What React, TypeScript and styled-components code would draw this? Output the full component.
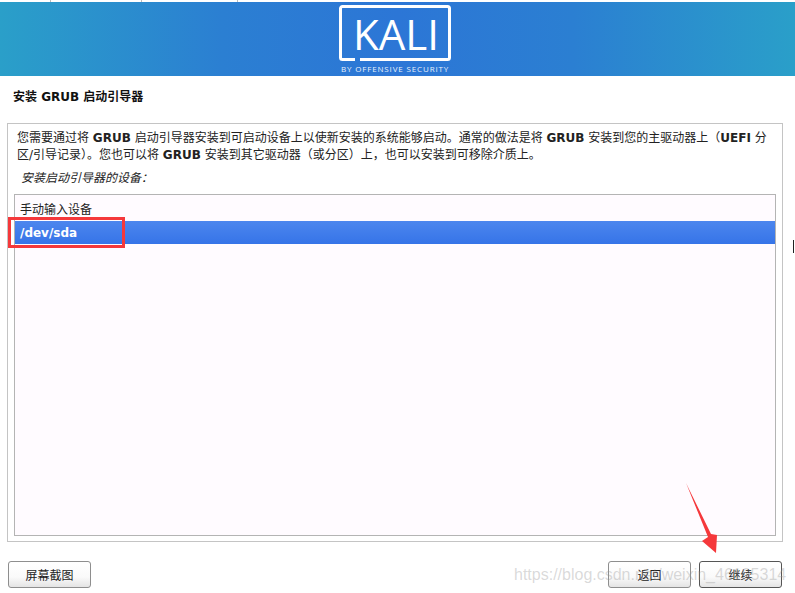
import React from 'react';
import styled, { createGlobalStyle } from 'styled-components';

const FONT = '"DejaVu Sans", "Noto Sans CJK SC", sans-serif';

const GlobalStyle = createGlobalStyle`
  html, body {
    margin: 0;
    padding: 0;
    background: #fff;
  }
  body {
    font-family: ${FONT};
    color: #222;
  }
`;

const Page = styled.div`
  position: relative;
  width: 795px;
  height: 593px;
  overflow: hidden;
  display: flex;
  flex-direction: column;
  background: #fff;
`;

const Banner = styled.header`
  height: 74px;
  margin-top: 2px;
  display: flex;
  justify-content: center;
  background: linear-gradient(90deg, #2a9fc9 0%, #2b7fd2 28%, #2c76d6 50%, #2b7fd2 72%, #2a9fc9 100%);
`;

const Heading = styled.h1`
  margin: 0;
  height: 47px;
  padding: 14px 0 0 13px;
  box-sizing: border-box;
  font-size: 12px;
  line-height: 14px;
  font-weight: 700;
  color: #111;
`;

const Panel = styled.section`
  width: 776px;
  height: 419px;
  margin-left: 7px;
  box-sizing: border-box;
  border: 1px solid #c4c4c4;
  padding: 6px 6px 5px;
  display: flex;
  flex-direction: column;
`;

const Intro = styled.p`
  margin: 0 0 0 3px;
  font-size: 12px;
  line-height: 17px;
  white-space: nowrap;
  color: #222;
`;

const Label = styled.p`
  margin: 6px 0 7px 7px;
  font-size: 12px;
  line-height: 17px;
  font-style: italic;
  color: #222;
`;

const DeviceList = styled.ul`
  flex: 1;
  list-style: none;
  margin: 0;
  padding: 5px 0 0;
  border: 1px solid #b4b4b4;
  background: #fffbff;
`;

const DeviceRow = styled.li<{ $selected?: boolean }>`
  height: ${p => (p.$selected ? 23 : 21)}px;
  padding-left: 5px;
  font-size: 12px;
  line-height: ${p => (p.$selected ? 24 : 21)}px;
  font-weight: ${p => (p.$selected ? 700 : 400)};
  color: ${p => (p.$selected ? '#fff' : '#222')};
  background: ${p => (p.$selected ? 'linear-gradient(180deg, #4c86ee 0%, #3674e8 100%)' : 'transparent')};
`;

const Footer = styled.footer`
  display: flex;
  justify-content: space-between;
  padding: 19px 13px 0 8px;
`;

const ButtonGroup = styled.div`
  display: flex;
  gap: 8px;
`;

const Button = styled.button<{ $focused?: boolean }>`
  width: 83px;
  height: 27px;
  padding: 0;
  border: 1px solid ${p => (p.$focused ? '#555' : '#8e8e8e')};
  border-radius: 3px;
  background: linear-gradient(180deg, #ffffff 0%, #fafafa 60%, #e4e4e4 100%);
  font-family: ${FONT};
  font-size: 12px;
  color: #222;
`;

const RedBox = styled.div`
  position: absolute;
  left: 8px;
  top: 217px;
  width: 111px;
  height: 25px;
  border: 3px solid #f5383b;
`;

const Overlay = styled.svg`
  position: absolute;
  left: 0;
  top: 0;
  pointer-events: none;
`;

const Watermark = styled.span`
  position: absolute;
  left: 514px;
  top: 566px;
  font-family: "Liberation Sans", sans-serif;
  font-size: 16px;
  line-height: 18px;
  white-space: nowrap;
  color: rgba(150, 150, 150, 0.36);
`;

function KaliLogo() {
  return (
    <svg width="119" height="74" viewBox="0 0 119 74">
      <path
        d="M17 57.5 H4.5 a2 2 0 0 1 -2 -2 V6.5 a2 2 0 0 1 2 -2 H109.5 a2 2 0 0 1 2 2 V55.5 a2 2 0 0 1 -2 2 H22"
        fill="none"
        stroke="#fff"
        strokeWidth="3"
      />
      <text x="15" y="48" textLength="86" lengthAdjust="spacingAndGlyphs" fontFamily='"Open Sans", sans-serif' fontWeight="500" fontSize="42" fill="#fff">
        KALI
      </text>
      <text x="57" y="69.5" textAnchor="middle" fontFamily='"Open Sans", sans-serif' fontSize="8" letterSpacing="0.85" fill="#e8f0fb">
        BY OFFENSIVE SECURITY
      </text>
    </svg>
  );
}

function Annotations() {
  return (
    <Overlay width="795" height="593" viewBox="0 0 795 593">
      <path d="M686 483 L711 534 L717 535 L716 553 L702 541 L708 537 Z" fill="#f5383b" />
      <rect x="793" y="240" width="1" height="13" fill="#222" />
      <rect x="50" y="0" width="1" height="2" fill="#bbb" />
      <rect x="141" y="0" width="1" height="2" fill="#bbb" />
      <rect x="237" y="0" width="1" height="2" fill="#bbb" />
    </Overlay>
  );
}

export default function App() {
  return (
    <Page>
      <GlobalStyle />
      <Banner>
        <KaliLogo />
      </Banner>
      <Heading>安装 GRUB 启动引导器</Heading>
      <Panel>
        <Intro>
          您需要通过将 <b>GRUB</b> 启动引导器安装到可启动设备上以使新安装的系统能够启动。通常的做法是将 <b>GRUB</b> 安装到您的主驱动器上（<b>UEFI</b> 分
          <br />
          区/引导记录）。您也可以将 <b>GRUB</b> 安装到其它驱动器（或分区）上，也可以安装到可移除介质上。
        </Intro>
        <Label>安装启动引导器的设备：</Label>
        <DeviceList>
          <DeviceRow>手动输入设备</DeviceRow>
          <DeviceRow $selected>/dev/sda</DeviceRow>
        </DeviceList>
      </Panel>
      <Footer>
        <Button>屏幕截图</Button>
        <ButtonGroup>
          <Button>返回</Button>
          <Button $focused>继续</Button>
        </ButtonGroup>
      </Footer>
      <RedBox />
      <Annotations />
      <Watermark>https://blog.csdn.net/weixin_46195314</Watermark>
    </Page>
  );
}
